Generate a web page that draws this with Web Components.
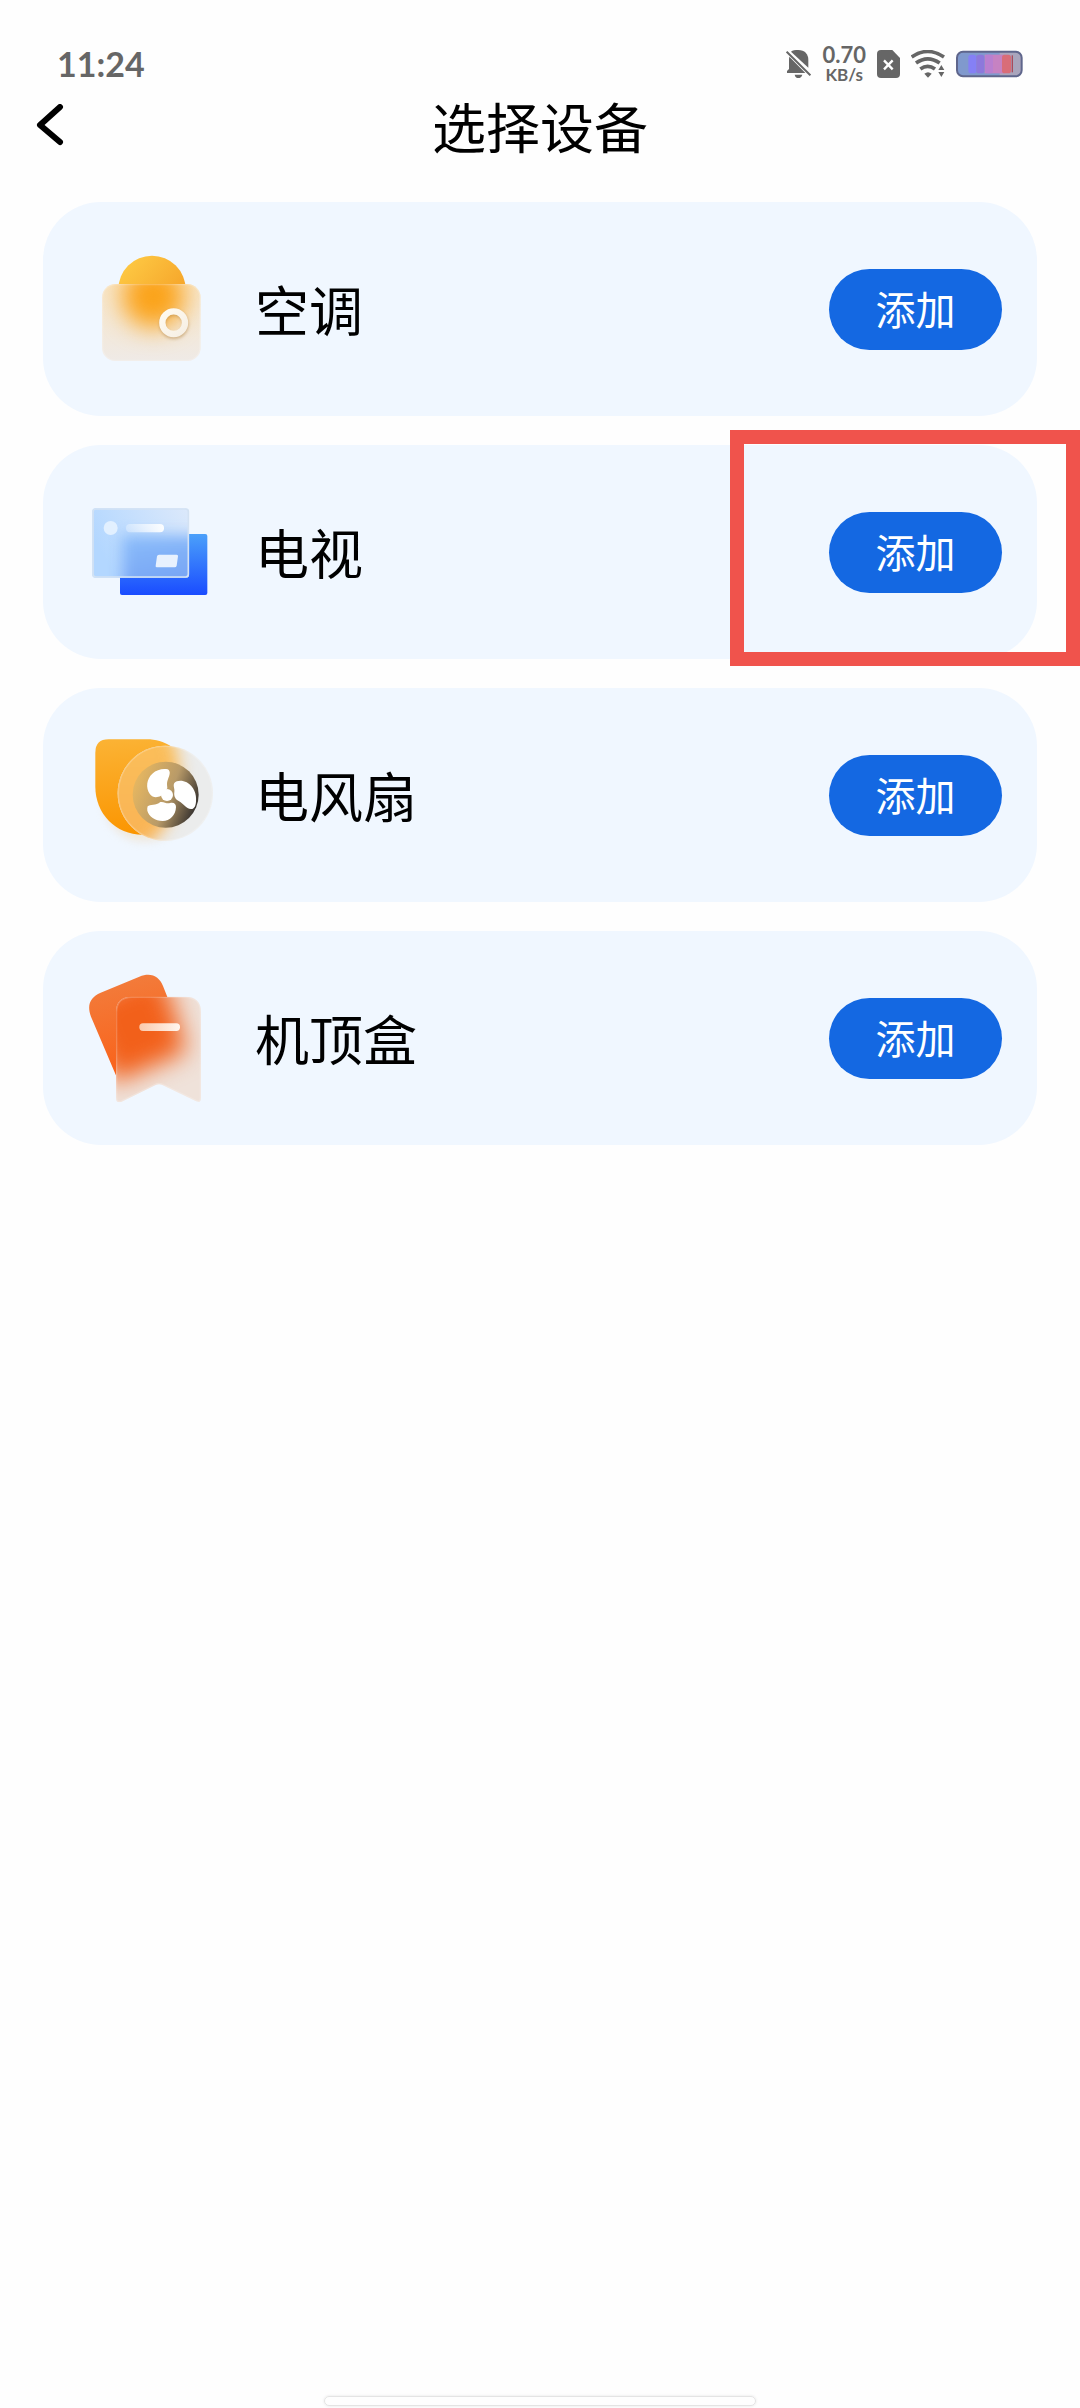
<!DOCTYPE html>
<html lang="zh-CN">
<head>
<meta charset="UTF-8">
<meta name="viewport" content="width=device-width, initial-scale=1.0">
<title>选择设备</title>
<style>
  body {
    margin: 0;
    background: #fefefe;
    color: #000;
    font-family: "Noto Sans CJK SC", sans-serif;
  }
  filter {
    color-interpolation-filters: sRGB;
  }
</style>
</head>
<body>
<device-page>
  <status-bar slot="top" time="11:24" speed="0.70" unit="KB/s"></status-bar>
  <page-header slot="top">选择设备</page-header>

  <device-card name="空调">
    <svg slot="icon" viewBox="150 153 408 408" aria-hidden="true">
      <defs>
        <linearGradient id="acSun" x1="0.1" y1="0" x2="0.9" y2="0.7">
          <stop offset="0" stop-color="#fecb45"></stop>
          <stop offset="1" stop-color="#f5a228"></stop>
        </linearGradient>
        <linearGradient id="acBox" x1="0" y1="0" x2="0" y2="1">
          <stop offset="0" stop-color="#f8e6c8"></stop>
          <stop offset="1" stop-color="#efeae6"></stop>
        </linearGradient>
        <linearGradient id="acRing" x1="0" y1="0" x2="1" y2="1">
          <stop offset="0" stop-color="#fffaf0"></stop>
          <stop offset="1" stop-color="#f6efe4"></stop>
        </linearGradient>
        <clipPath id="acClip"><rect x="216" y="282" width="296" height="231" rx="40"></rect></clipPath>
        <filter id="acBlur" filterUnits="userSpaceOnUse" x="100" y="100" width="540" height="540"><feGaussianBlur stdDeviation="36"></feGaussianBlur></filter>
        <filter id="acShadow" x="-50%" y="-50%" width="200%" height="200%"><feGaussianBlur stdDeviation="4"></feGaussianBlur></filter>
      </defs>
      <circle cx="366" cy="298" r="101" fill="url(#acSun)"></circle>
      <rect x="216" y="282" width="296" height="231" rx="40" fill="url(#acBox)"></rect>
      <g clip-path="url(#acClip)">
        <circle cx="370" cy="320" r="94" fill="#fba31a" filter="url(#acBlur)"></circle>
      </g>
      <rect x="218" y="284" width="292" height="227" rx="38" fill="none" stroke="#fff" stroke-opacity="0.2" stroke-width="4"></rect>
      <circle cx="432" cy="403" r="35" fill="none" stroke="#b08040" stroke-opacity="0.5" stroke-width="18" filter="url(#acShadow)"></circle>
      <circle cx="431" cy="398" r="34" fill="none" stroke="url(#acRing)" stroke-width="19"></circle>
    </svg>
  </device-card>

  <device-card name="电视" highlighted>
    <svg slot="icon" viewBox="30 12 408 408" aria-hidden="true">
      <defs>
        <linearGradient id="tvBack" x1="0" y1="0" x2="0" y2="1">
          <stop offset="0" stop-color="#4ba0fa"></stop>
          <stop offset="1" stop-color="#1a4cff"></stop>
        </linearGradient>
        <linearGradient id="tvGlass" x1="0" y1="0.4" x2="1" y2="0">
          <stop offset="0" stop-color="#b3d7ff"></stop>
          <stop offset="1" stop-color="#dce9fb"></stop>
        </linearGradient>
        <linearGradient id="tvBlob" x1="0" y1="0" x2="0.3" y2="1">
          <stop offset="0" stop-color="#8bbdfa"></stop>
          <stop offset="1" stop-color="#719df3"></stop>
        </linearGradient>
        <linearGradient id="tvWhite" x1="0" y1="0" x2="1" y2="0">
          <stop offset="0" stop-color="#fff" stop-opacity="0.3"></stop>
          <stop offset="1" stop-color="#fff" stop-opacity="0.95"></stop>
        </linearGradient>
        <clipPath id="tvClip"><rect x="67" y="85" width="290" height="208" rx="9"></rect></clipPath>
        <filter id="tvBlur" x="-30%" y="-30%" width="160%" height="160%"><feGaussianBlur stdDeviation="20"></feGaussianBlur></filter>
      </defs>
      <rect x="150" y="162" width="262" height="183" rx="6" fill="url(#tvBack)"></rect>
      <rect x="67" y="85" width="290" height="208" rx="9" fill="url(#tvGlass)"></rect>
      <g clip-path="url(#tvClip)">
        <rect x="156" y="166" width="290" height="210" fill="url(#tvBlob)" filter="url(#tvBlur)"></rect>
      </g>
      <rect x="69" y="87" width="286" height="204" rx="8" fill="none" stroke="#d3e2f3" stroke-width="5"></rect>
      <circle cx="122" cy="144" r="21" fill="#e2f0ff"></circle>
      <rect x="168" y="132" width="114" height="25" rx="12" fill="url(#tvWhite)"></rect>
      <path d="M267 224H320Q325 224 324 229L320 257Q319 262 314 262H261Q256 262 257 257L261 229Q262 224 267 224Z" fill="#e8f1fe"></path>
    </svg>
  </device-card>

  <device-card name="电风扇">
    <svg slot="icon" viewBox="30 51 408 408" aria-hidden="true">
      <defs>
        <linearGradient id="fanBack" x1="0.4" y1="0" x2="0.5" y2="1">
          <stop offset="0" stop-color="#fbb233"></stop>
          <stop offset="1" stop-color="#fb9500"></stop>
        </linearGradient>
        <linearGradient id="fanBlob" x1="0" y1="0" x2="0" y2="1">
          <stop offset="0" stop-color="#fbc15b"></stop>
          <stop offset="1" stop-color="#f9b254"></stop>
        </linearGradient>
        <linearGradient id="fanDisc" x1="0" y1="0.3" x2="1" y2="0.7">
          <stop offset="0" stop-color="#e8b860"></stop>
          <stop offset="0.55" stop-color="#b89a68"></stop>
          <stop offset="1" stop-color="#2e2b2b"></stop>
        </linearGradient>
        <clipPath id="fanClip"><circle cx="286" cy="250" r="143"></circle></clipPath>
        <filter id="fanBlur" filterUnits="userSpaceOnUse" x="-60" y="-60" width="540" height="600"><feGaussianBlur stdDeviation="24"></feGaussianBlur></filter>
        <filter id="fanShadow" x="-30%" y="-30%" width="160%" height="160%"><feGaussianBlur stdDeviation="12"></feGaussianBlur></filter>
      </defs>
      <circle cx="225" cy="270" r="126" fill="#f0c890" fill-opacity="0.3" filter="url(#fanShadow)"></circle>
      <path d="M76 128Q76 88 116 88H230C310 88 361 150 361 230S300 374 218 374S76 310 76 230Z" fill="url(#fanBack)"></path>
      <circle cx="286" cy="250" r="143" fill="#ebecec"></circle>
      <g clip-path="url(#fanClip)">
        <path d="M20 20H270C320 80 345 190 320 270S260 400 190 420H20Z" fill="url(#fanBlob)" filter="url(#fanBlur)"></path>
      </g>
      <circle cx="286" cy="250" r="141" fill="none" stroke="#fff" stroke-opacity="0.2" stroke-width="4"></circle>
      <circle cx="287" cy="254" r="99" fill="url(#fanDisc)"></circle>
      <g fill="#fff">
        <circle cx="291" cy="255" r="18"></circle>
        <path d="M293 178C304 184 298 197 294 208C289 220 292 228 292 235L272 258C262 263 248 264 240 253C226 233 230 206 247 191C260 179 278 175 293 178Z"></path>
        <path d="M313 219C320 210 338 210 350 217C372 230 380 252 378 275C377 288 372 298 363 297C348 296 340 280 326 273C316 268 311 258 313 246C315 236 308 228 313 219Z"></path>
        <path d="M233 289C240 282 258 288 271 276C283 274 288 282 300 279C312 276 318 282 318 291C317 316 300 333 278 333C256 333 236 319 232 302Q231 294 233 289Z"></path>
      </g>
    </svg>
  </device-card>

  <device-card name="机顶盒">
    <svg slot="icon" viewBox="30 60 408 408" aria-hidden="true">
      <defs>
        <linearGradient id="boxBack" x1="0.4" y1="0" x2="0.6" y2="1">
          <stop offset="0" stop-color="#f27c3c"></stop>
          <stop offset="1" stop-color="#fb5e14"></stop>
        </linearGradient>
        <linearGradient id="boxDash" x1="0" y1="0" x2="1" y2="0">
          <stop offset="0" stop-color="#fbc9ac"></stop>
          <stop offset="1" stop-color="#fff7f0"></stop>
        </linearGradient>
        <clipPath id="boxClip"><path d="M138 187Q138 140 185 140H346Q393 140 393 187V443Q393 461 377 453L277 405Q267 400 257 405L155 455Q138 461 138 443Z"></path></clipPath>
        <filter id="boxBlur" filterUnits="userSpaceOnUse" x="-60" y="-60" width="600" height="640"><feGaussianBlur stdDeviation="36"></feGaussianBlur></filter>
      </defs>
      <path d="M63 200C50 165 60 142 92 128L208 80C244 66 268 80 279 108L340 262L148 400Z" fill="url(#boxBack)"></path>
      <g clip-path="url(#boxClip)">
        <rect x="130" y="130" width="270" height="340" fill="#efe2da"></rect>
        <path d="M40 190L90 128L250 60L300 130L350 305L130 400Z" fill="#f2601a" filter="url(#boxBlur)"></path>
        <path d="M138 187Q138 140 185 140H346Q393 140 393 187V443Q393 461 377 453L277 405Q267 400 257 405L155 455Q138 461 138 443Z" fill="none" stroke="#fff" stroke-opacity="0.2" stroke-width="8"></path>
      </g>
      <rect x="208" y="220" width="122" height="23" rx="11" fill="url(#boxDash)"></rect>
    </svg>
  </device-card>
</device-page>

<script>
class DevicePage extends HTMLElement {
  connectedCallback() {
    this.attachShadow({ mode: 'open' });
    this.shadowRoot.innerHTML = `
      <style>
        :host {
          display: flex;
          flex-direction: column;
          min-height: 100vh;
          overflow: hidden;
        }
        main {
          flex: 1;
          display: flex;
          flex-direction: column;
          gap: 29px;
          padding: 38px 43px;
        }
        .home-indicator {
          align-self: center;
          box-sizing: border-box;
          width: 40%;
          height: 10px;
          margin-bottom: 2px;
          border: 1px solid #e4e4e4;
          border-radius: 5px;
          box-shadow: 0 0 3px rgba(0, 0, 0, 0.1);
        }
      </style>
      <slot name="top"></slot>
      <main><slot></slot></main>
      <div class="home-indicator"></div>
    `;
  }
}

class StatusBar extends HTMLElement {
  connectedCallback() {
    this.attachShadow({ mode: 'open' });
    this.shadowRoot.innerHTML = `
      <style>
        :host {
          display: flex;
          justify-content: space-between;
          align-items: center;
          height: 48px;
          padding: 40px 57px 0;
          color: #666;
          font-family: Lato, sans-serif;
          font-weight: 700;
        }
        .time {
          font-size: 34px;
          line-height: 46px;
        }
        .icons {
          display: flex;
          align-items: center;
          gap: 11px;
        }
        .speed {
          display: flex;
          flex-direction: column;
          align-items: center;
          font-size: 22px;
          line-height: 22px;
        }
        .speed small {
          font-size: 17px;
          line-height: 18px;
        }
        svg {
          display: block;
          height: 28px;
          fill: currentColor;
        }
      </style>
      <span class="time">${this.getAttribute('time')}</span>
      <div class="icons">
        <svg width="25" viewBox="78 60 75 84" aria-hidden="true">
          <path d="M93 65C98 61 105 60 115 60C134 60 145 72 145 90V113Z"></path>
          <path d="M88 80L136 129H81V123L87 117V90Q87 84 88 80Z"></path>
          <path d="M104 134H127Q124 144 115 144T104 134Z"></path>
          <path d="M80 65L151 136" stroke="currentColor" stroke-width="6"></path>
        </svg>
        <div class="speed">
          <span>${this.getAttribute('speed')}</span>
          <small>${this.getAttribute('unit')}</small>
        </div>
        <svg width="23" viewBox="354 60 69 84" aria-hidden="true">
          <path d="M366 60H400L423 84V132Q423 144 411 144H366Q354 144 354 132V72Q354 60 366 60Z"></path>
          <path d="M375 91L401 118M401 91L375 118" stroke="#fff" stroke-width="7"></path>
        </svg>
        <svg width="34" viewBox="456 62 102 84" aria-hidden="true">
          <g fill="none" stroke="currentColor" stroke-width="11">
            <path d="M458 83Q506 50 555 83"></path>
            <path d="M471 101Q506 76 542 101"></path>
            <path d="M484 119Q506 103 528 119"></path>
          </g>
          <path d="M496 133Q507 124 518 133L507 145Z"></path>
          <path d="M538 122L547 107L556 122ZM538 128H556L547 143Z"></path>
        </svg>
        <svg width="67" viewBox="589 60 201 84" aria-hidden="true">
          <rect x="592" y="65" width="194" height="74" rx="18" fill="#a9a5bc"></rect>
          <path d="M610 65H720V139H610Q592 139 592 121V83Q592 65 610 65Z" fill="#8099cd"></path>
          <rect x="675" y="74" width="60" height="56" fill="#c682c2"></rect>
          <rect x="626" y="74" width="24" height="56" rx="8" fill="#8580f5"></rect>
          <rect x="650" y="74" width="24" height="56" rx="8" fill="#8d78dc"></rect>
          <rect x="677" y="74" width="23" height="56" rx="6" fill="#b97fd0"></rect>
          <rect x="727" y="74" width="27" height="56" rx="8" fill="#d96d78"></rect>
          <path d="M758 76V127" stroke="#a84c5c" stroke-width="4"></path>
          <rect x="592" y="65" width="194" height="74" rx="18" fill="none" stroke="#5f668c" stroke-width="6"></rect>
        </svg>
      </div>
    `;
  }
}

class PageHeader extends HTMLElement {
  connectedCallback() {
    this.attachShadow({ mode: 'open' });
    this.shadowRoot.innerHTML = `
      <style>
        :host {
          display: grid;
          grid-template-columns: 64px 1fr 64px;
          align-items: center;
          height: 76px;
          padding: 0 18px;
        }
        button {
          display: flex;
          justify-content: center;
          align-items: center;
          height: 64px;
          padding: 0;
          border: none;
          background: none;
          color: inherit;
          cursor: pointer;
        }
        h1 {
          margin: 0;
          font-size: 54px;
          line-height: 76px;
          font-weight: 400;
          text-align: center;
        }
      </style>
      <button type="button" aria-label="返回">
        <svg width="28" height="44" viewBox="0 0 28 44" fill="none" stroke="currentColor" stroke-width="6" stroke-linecap="round" stroke-linejoin="round" aria-hidden="true">
          <path d="M24 3L4 21L24 38"></path>
        </svg>
      </button>
      <h1><slot></slot></h1>
    `;
  }
}

class DeviceCard extends HTMLElement {
  connectedCallback() {
    const name = this.getAttribute('name');
    this.attachShadow({ mode: 'open' });
    this.shadowRoot.innerHTML = `
      <style>
        :host {
          display: flex;
          align-items: center;
          gap: 39px;
          position: relative;
          padding: 39px 35px 39px 37px;
          border-radius: 58px;
          background: #f0f7ff;
        }
        ::slotted(svg) {
          display: block;
          flex: none;
          width: 136px;
          height: 136px;
        }
        h2 {
          flex: 1;
          margin: 0;
          font-size: 54px;
          line-height: 78px;
          font-weight: 400;
        }
        button {
          width: 173px;
          height: 81px;
          padding: 0 0 2px;
          border: none;
          border-radius: 41px;
          background: #1468e2;
          color: #fff;
          font-family: inherit;
          font-size: 40px;
          line-height: 58px;
          cursor: pointer;
        }
        /* Red frame around the add button, reaches the screen edge */
        :host([highlighted])::after {
          content: '';
          position: absolute;
          box-sizing: border-box;
          top: -15px;
          right: -43px;
          bottom: -7px;
          width: 350px;
          border: 14px solid #f0534c;
          pointer-events: none;
        }
      </style>
      <slot name="icon"></slot>
      <h2>${name}</h2>
      <button type="button" aria-label="添加${name}">添加</button>
    `;
  }
}

customElements.define('device-page', DevicePage);
customElements.define('status-bar', StatusBar);
customElements.define('page-header', PageHeader);
customElements.define('device-card', DeviceCard);
</script>
</body>
</html>
